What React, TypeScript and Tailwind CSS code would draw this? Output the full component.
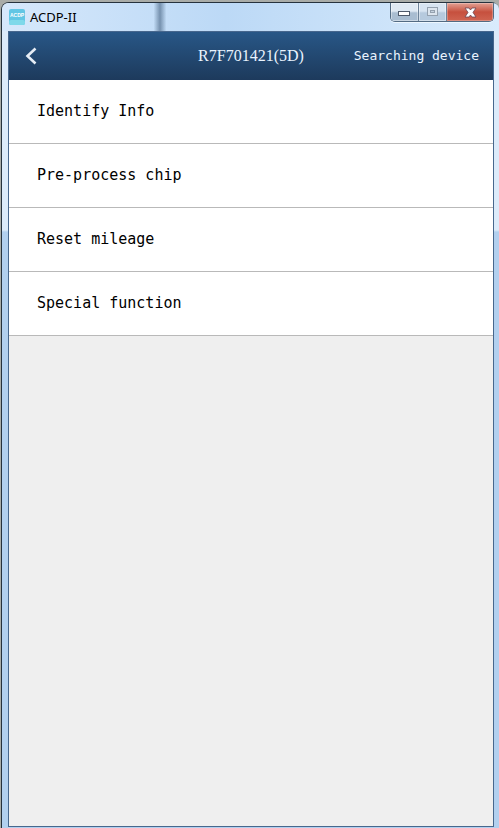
const menuItems = ["Identify Info", "Pre-process chip", "Reset mileage", "Special function"];

function AppIcon() {
  return (
    <svg width="16" height="16" viewBox="0 0 16 16" aria-hidden="true">
      <rect width="16" height="16" rx="2" fill="#62c6e4" />
      <rect y="11" width="16" height="5" rx="2" fill="#7fd9ea" />
      <text x="8" y="8" textAnchor="middle" fontFamily="Liberation Sans, sans-serif" fontSize="5" fontWeight="700" fill="#fff">
        ACDP
      </text>
    </svg>
  );
}

function WindowControls() {
  return (
    <div className="mr-[5px] flex h-[19px] overflow-hidden rounded-b-[5px] border border-t-0 border-[#536b83] shadow-[0_1px_0_#eef7ff]">
      <button
        aria-label="Minimize"
        className="flex w-7 items-center justify-center border-r border-[#6d8298] bg-linear-to-b from-[#dfe9f3] from-45% to-[#a9bdd1] to-55% shadow-[inset_0_0_0_1px_#ffffff66]"
      >
        <svg width="13" height="6" viewBox="0 0 13 6" className="mt-1">
          <rect x="0.5" y="0.5" width="11" height="4" fill="#fff" stroke="#4f5a6b" />
        </svg>
      </button>
      <button
        aria-label="Maximize"
        className="flex w-7 items-center justify-center border-r border-[#6d8298] bg-linear-to-b from-[#d7e4f1] from-45% to-[#b6cade] to-55% shadow-[inset_0_0_0_1px_#ffffff66]"
      >
        <svg width="12" height="10" viewBox="0 0 12 10">
          <rect x="0.5" y="0.5" width="10" height="8" fill="#dce5ee" stroke="#94a1af" />
          <rect x="3.5" y="3.5" width="4" height="2" fill="#c5d2df" stroke="#94a1af" />
        </svg>
      </button>
      <button
        aria-label="Close"
        className="flex w-[46px] items-center justify-center bg-linear-to-b from-[#e2a093] via-[#c6503e] via-50% to-[#cf6451] shadow-[inset_0_0_0_1px_#ffffff44]"
      >
        <svg width="13" height="11" viewBox="0 0 13 11">
          <path
            d="M1 1h4l1.5 2L8 1h4L9 5.4 12 10H8L6.5 8 5 10H1l3-4.6z"
            fill="#fff"
            stroke="#6b4550"
            strokeWidth="0.8"
          />
        </svg>
      </button>
    </div>
  );
}

function TitleBar() {
  return (
    <div className="relative flex h-7 items-start justify-between overflow-hidden rounded-t-md bg-linear-to-r from-[#d6e8fb] via-[#bcd9f6] via-45% to-[#d9ebfc] pl-[7px]">
      <div className="absolute inset-y-0 left-[152px] w-3 bg-linear-to-r from-[#8fadc9]/10 via-[#7591ae] to-[#8fadc9]/10" />
      <div className="flex h-7 items-center gap-[5px]">
        <AppIcon />
        <span className="text-[13px] leading-4 text-black">ACDP-II</span>
      </div>
      <WindowControls />
    </div>
  );
}

function Header() {
  return (
    <header className="grid h-12 grid-cols-[1fr_auto_1fr] items-center bg-linear-to-b from-[#285787] to-[#1d3a5c] text-[#eaf4ff]">
      <button aria-label="Back" className="flex h-12 w-11 items-center justify-center">
        <svg width="12" height="18" viewBox="0 0 12 18" fill="none" stroke="#e6edf5" strokeWidth="2.6">
          <path d="M10.5 1.5 2.5 9l8 7.5" />
        </svg>
      </button>
      <h1 className="font-['Liberation_Serif',serif] text-[16px] leading-5">R7F701421(5D)</h1>
      <span className="pr-3.5 text-right font-['DejaVu_Sans_Mono',monospace] text-[13px] leading-5 whitespace-nowrap">
        Searching device
      </span>
    </header>
  );
}

export default function App() {
  return (
    <div className="flex min-h-screen flex-col bg-[#a9aca8] pt-0.5 pl-px font-['Noto_Sans',sans-serif]">
      <div className="flex flex-1 flex-col rounded-t-lg border-t border-l border-[#26323d] bg-linear-to-b from-[#dcebfa] from-[227px] to-[#b2d0ef] to-[229px]">
        <TitleBar />
        <div className="mr-[5px] mb-px ml-1.5 flex flex-1 flex-col border border-[#47678d] bg-[#efefef]">
          <Header />
          <nav>
            <ul>
              {menuItems.map((item) => (
                <li key={item} className="border-b border-[#b9b9b9] bg-white">
                  <button className="block h-[63px] w-full px-7 text-left font-['DejaVu_Sans_Mono',monospace] text-[15px] text-black">
                    {item}
                  </button>
                </li>
              ))}
            </ul>
          </nav>
        </div>
      </div>
    </div>
  );
}
